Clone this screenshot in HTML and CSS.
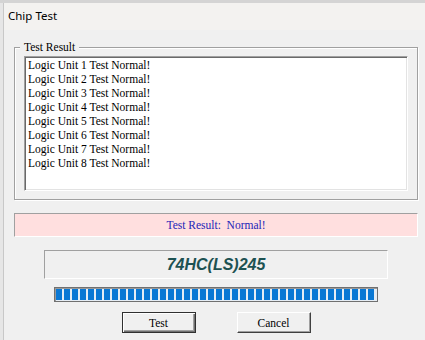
FILE: index.html
```html
<!DOCTYPE html>
<html lang="en">
<head>
    <meta charset="UTF-8">
    <meta name="viewport" content="width=device-width, initial-scale=1.0">
    <title>Chip Test</title>
    <link rel="stylesheet" href="styles.css">
</head>
<body>
    <div class="desk-top"></div>
    <div class="desk">
        <div class="desk-edge"></div>
        <div class="dialog">
            <div class="titlebar">Chip Test</div>
            <div class="dialog-body">
                <fieldset class="group">
                    <legend>Test Result</legend>
                    <ul class="result-list">
                        <li>Logic Unit 1 Test Normal!</li>
                        <li>Logic Unit 2 Test Normal!</li>
                        <li>Logic Unit 3 Test Normal!</li>
                        <li>Logic Unit 4 Test Normal!</li>
                        <li>Logic Unit 5 Test Normal!</li>
                        <li>Logic Unit 6 Test Normal!</li>
                        <li>Logic Unit 7 Test Normal!</li>
                        <li>Logic Unit 8 Test Normal!</li>
                    </ul>
                </fieldset>
                <div class="status">Test Result:&nbsp; Normal!</div>
                <div class="chip-name">74HC(LS)245</div>
                <div class="progress" id="progress"></div>
                <div class="buttons">
                    <button class="btn btn-default">Test</button>
                    <button class="btn">Cancel</button>
                </div>
            </div>
        </div>
    </div>

    <script>
        const progress = document.getElementById('progress');
        for (let i = 0; i < 40; i++) {
            const block = document.createElement('span');
            block.className = 'block';
            progress.appendChild(block);
        }
    </script>
</body>
</html>
```

FILE: styles.css
```css
html, body {
    margin: 0;
    padding: 0;
    height: 100%;
    overflow: hidden;
}
body {
    font-family: "Liberation Serif", "Times New Roman", serif;
    font-size: 11.5px;
    background-color: #f0f0f0;
    color: #000;
}
.desk-top {
    height: 3px;
    background-color: #d4d4d4;
}
.desk {
    display: flex;
    height: 337px;
}
.desk-edge {
    width: 3px;
    flex: none;
    background-color: #e6e6e6;
    border-right: 1px solid #c8c8c8;
}
.dialog {
    flex: 1;
    display: flex;
    flex-direction: column;
    background-color: #f0f0f0;
}
.titlebar {
    height: 27px;
    padding-left: 4px;
    line-height: 26px;
    font-family: "Noto Sans", "Liberation Sans", sans-serif;
    font-size: 11.5px;
    color: #000;
    background-color: #f3f2f0;
}
.dialog-body {
    padding: 10px 0 0 10px;
    width: 404px;
    display: flex;
    flex-direction: column;
    align-items: center;
}
.group {
    box-sizing: border-box;
    width: 404px;
    margin: 0;
    padding: 2px 9px 8px 9px;
    border: 1px solid #a0a0a0;
    box-shadow: inset 1px 1px 0 #fff, 1px 1px 0 #fff;
}
.group legend {
    margin-left: -4px;
    padding: 0 4px;
    line-height: 14px;
    background-color: #f0f0f0;
}
.result-list {
    list-style: none;
    margin: 0;
    padding: 1px 2px 0 2px;
    height: 132px;
    background-color: #fff;
    border: 1px solid;
    border-color: #a0a0a0 #fff #fff #a0a0a0;
    box-shadow: inset 1px 1px 0 #696969, inset -1px -1px 0 #e3e3e3;
}
.result-list li {
    line-height: 14px;
    padding-left: 1px;
}
.status {
    box-sizing: border-box;
    width: 404px;
    height: 24px;
    margin-top: 13px;
    line-height: 23px;
    text-align: center;
    color: #2424b8;
    background-color: #ffdfdf;
    border: 1px solid;
    border-color: #a0a0a0 #fff #fff #a0a0a0;
}
.chip-name {
    box-sizing: border-box;
    width: 344px;
    height: 29px;
    margin-top: 13px;
    line-height: 28px;
    text-align: center;
    font-family: "Liberation Sans", Arial, sans-serif;
    font-size: 16px;
    font-weight: bold;
    font-style: italic;
    color: #1d5252;
    border: 1px solid;
    border-color: #a0a0a0 #fff #fff #a0a0a0;
}
.progress {
    box-sizing: border-box;
    width: 324px;
    height: 15px;
    margin-top: 8px;
    padding: 1px;
    display: flex;
    gap: 2px;
    background-color: #e6edf4;
    border: 1px solid #707070;
    box-shadow: inset 1px 1px 0 #9a9a9a;
}
.block {
    width: 6px;
    flex: none;
    background-color: #0a78d4;
}
.buttons {
    display: flex;
    gap: 41px;
    margin-top: 10px;
}
.btn {
    box-sizing: border-box;
    width: 74px;
    height: 21px;
    padding: 0;
    font-family: "Liberation Serif", "Times New Roman", serif;
    font-size: 11.5px;
    color: #000;
    background-color: #f0f0f0;
    border: 1px solid;
    border-color: #fff #404040 #404040 #fff;
    box-shadow: inset -1px -1px 0 #a0a0a0;
    border-radius: 0;
}
.btn-default {
    border: 1px solid #303030;
    box-shadow: inset 1px 1px 0 #fff, inset -1px -1px 0 #707070, inset -2px -2px 0 #a0a0a0;
}
```
